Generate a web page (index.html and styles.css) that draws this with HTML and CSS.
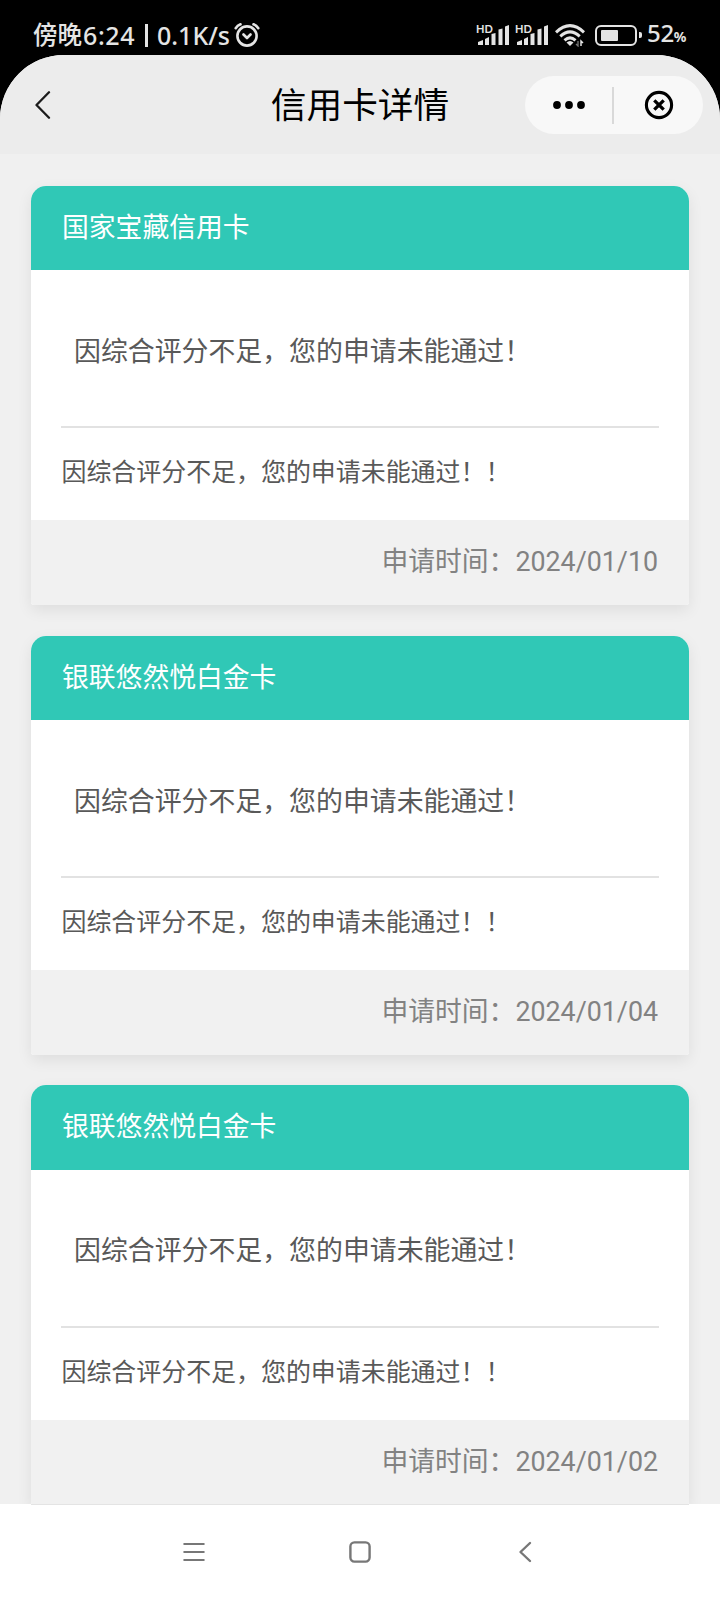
FILE: index.html
```html
<!DOCTYPE html>
<html lang="zh-CN">
  <head>
    <meta charset="utf-8">
    <meta name="viewport" content="width=device-width, initial-scale=1">
    <title>信用卡详情</title>
    <link rel="stylesheet" href="styles.css">
  </head>
  <body>
    <div class="status-bar">
      <div class="status-left">
        <span class="period">傍晚</span>
        <span class="clock">6:24</span>
        <span class="sep"></span>
        <span class="speed">0.1K/s</span>
        <svg class="alarm" width="26" height="26" viewBox="0 0 26 26" fill="none" stroke="#e4e4e4" stroke-width="2.6" stroke-linecap="round" stroke-linejoin="round">
          <circle cx="13" cy="14" r="9.6"/>
          <path d="M9.5 12.5l3.5 3.5 3.5-3.5M1.7 6.2Q3.5 3.4 6.5 2.3M24.3 6.2Q22.5 3.4 19.5 2.3"/>
        </svg>
      </div>
      <div class="status-right">
        <div class="signal">
          <span class="hd">HD</span>
          <svg width="32" height="20" viewBox="0 0 32 20" fill="#e4e4e4">
            <path d="M0 20v-3l5-2v5zM7 20v-6l4-2v8zM13.500 20V9l4-1v12zM20.500 20V4.500l4-1V20zM27 20V1.500L31 0v20z"/>
          </svg>
        </div>
        <div class="signal">
          <span class="hd">HD</span>
          <svg width="32" height="20" viewBox="0 0 32 20" fill="#e4e4e4">
            <path d="M0 20v-3l5-2v5zM7 20v-6l4-2v8zM13.500 20V9l4-1v12zM20.500 20V4.500l4-1V20zM27 20V1.500L31 0v20z"/>
          </svg>
        </div>
        <svg class="wifi" width="30" height="24" viewBox="0 0 30 24" fill="none" stroke="#e4e4e4" stroke-width="3">
          <path d="M1 9.300Q15-3.900 29 9.300M5.300 13.400Q15 4.400 24.700 13.400M9.500 17.300Q15 12.500 20.500 17.300"/>
          <path d="M11.500 19.500Q15 16.500 18.500 19.500L15 23z" fill="#e4e4e4" stroke="none"/>
          <path d="M23 18v5l-2-2" stroke="#777" stroke-width="1.300"/>
          <path d="M26 23v-5l2 2" stroke-width="1.500"/>
        </svg>
        <div class="battery"><span class="level"></span></div>
        <span class="percent">52<small>%</small></span>
      </div>
    </div>

    <div class="app">
      <header class="nav-bar">
        <svg class="back" width="16" height="28" viewBox="0 0 16 28" fill="none" stroke="#1c1c1c" stroke-width="2.300" stroke-linecap="round" stroke-linejoin="round">
          <path d="M14 1.300L1.500 14 14 26.700"/>
        </svg>
        <h1>信用卡详情</h1>
        <div class="capsule">
          <svg class="more" width="32" height="8" viewBox="0 0 32 8">
            <circle cx="4" cy="4" r="3.900"/>
            <circle cx="16" cy="4" r="3.900"/>
            <circle cx="28" cy="4" r="3.900"/>
          </svg>
          <span class="line"></span>
          <svg class="close" width="30" height="30" viewBox="0 0 30 30" fill="none" stroke="#000" stroke-width="3.100">
            <circle cx="15" cy="15" r="12.600"/>
            <path d="M10.300 10.300l9.400 9.400M19.700 10.300l-9.400 9.400" stroke-width="3.300"/>
          </svg>
        </div>
      </header>

      <main>
        <section class="card">
          <h2>国家宝藏信用卡</h2>
          <div class="card-body">
            <p class="result">因综合评分不足，您的申请未能通过！</p>
            <p class="reason">因综合评分不足，您的申请未能通过！！</p>
          </div>
          <div class="card-footer">申请时间：2024/01/10</div>
        </section>
        <section class="card">
          <h2>银联悠然悦白金卡</h2>
          <div class="card-body">
            <p class="result">因综合评分不足，您的申请未能通过！</p>
            <p class="reason">因综合评分不足，您的申请未能通过！！</p>
          </div>
          <div class="card-footer">申请时间：2024/01/04</div>
        </section>
        <section class="card">
          <h2>银联悠然悦白金卡</h2>
          <div class="card-body">
            <p class="result">因综合评分不足，您的申请未能通过！</p>
            <p class="reason">因综合评分不足，您的申请未能通过！！</p>
          </div>
          <div class="card-footer">申请时间：2024/01/02</div>
        </section>
      </main>
    </div>

    <footer class="system-nav">
      <svg width="24" height="24" viewBox="0 0 24 24" fill="none" stroke="#777" stroke-width="2.200" stroke-linecap="round">
        <path d="M2.300 4h19.400M2.300 12h19.400M2.300 20h19.400"/>
      </svg>
      <svg width="24" height="24" viewBox="0 0 24 24" fill="none" stroke="#777" stroke-width="2.400">
        <rect x="2.400" y="2.400" width="19.200" height="19.200" rx="4"/>
      </svg>
      <svg width="24" height="24" viewBox="0 0 24 24" fill="none" stroke="#777" stroke-width="2.400" stroke-linecap="round" stroke-linejoin="round">
        <path d="M16 3L6.500 12l9.500 9"/>
      </svg>
    </footer>
  </body>
</html>
```
FILE: styles.css
```css
* {
    box-sizing: border-box;
}

body {
    margin: 0;
    height: 1600px;
    display: flex;
    flex-direction: column;
    overflow: hidden;
    background: #000;
    font-family: Roboto, 'Noto Sans CJK SC', sans-serif;
}

h1, h2, p {
    margin: 0;
    font-weight: 400;
}

svg {
    display: block;
    flex: none;
}

.status-bar {
    flex: none;
    height: 55px;
    padding: 14px 33px 0 33px;
    display: flex;
    justify-content: space-between;
    color: #e4e4e4;
    font-family: 'Noto Sans', 'Noto Sans CJK SC', sans-serif;
    font-size: 25px;
    font-weight: 500;
    line-height: 42px;
}

.status-left, .status-right {
    display: flex;
    align-items: center;
    height: 42px;
    white-space: nowrap;
}

.period {
    width: 50px;
    font-size: 24.5px;
}

.clock {
    width: 62px;
    letter-spacing: 0.6px;
}

.sep {
    width: 3px;
    height: 23px;
    background: #e4e4e4;
}

.speed {
    width: 74px;
    margin-left: 9px;
}

.alarm {
    margin-left: 3px;
}

.signal {
    position: relative;
    width: 33px;
    margin-right: 6px;
    padding-left: 1px;
}

.hd {
    position: absolute;
    left: -1px;
    top: -1px;
    font-family: Lato, sans-serif;
    font-size: 11px;
    font-weight: 700;
    line-height: 10px;
}

.wifi {
    margin-right: 10px;
}

.battery {
    width: 42px;
    height: 21px;
    border: 2px solid #e4e4e4;
    border-radius: 6px;
    padding: 3px 3px 3px 4px;
    position: relative;
}

.battery:after {
    content: "";
    position: absolute;
    right: -7px;
    top: 5px;
    width: 3px;
    height: 6px;
    border-radius: 0 2px 2px 0;
    background: #e4e4e4;
}

.level {
    display: block;
    width: 17px;
    height: 11px;
    border-radius: 1px;
    background: #e4e4e4;
}

.percent {
    width: 40px;
    margin-left: 10px;
    font-size: 24px;
    letter-spacing: -0.3px;
}

.percent small {
    font-size: 14px;
    font-weight: 700;
}

.app {
    flex: none;
    height: 1449px;
    overflow: hidden;
    border-radius: 64px 64px 0 0;
    background: #f0f0f0;
}

.nav-bar {
    height: 99px;
    padding: 1px 17px 0 35px;
    display: grid;
    grid-template-columns: 160px 1fr 178px;
    align-items: center;
    background: #ececec;
}

h1 {
    padding-top: 2px;
    text-align: center;
    font-size: 35.7px;
    line-height: 50px;
    color: #000;
}

.capsule {
    height: 58px;
    display: flex;
    align-items: center;
    border-radius: 29px;
    background: #f8f8f8;
}

.more {
    margin-left: 28px;
}

.line {
    width: 2px;
    height: 37px;
    margin: 0 30px 0 27px;
    background: #d9d9d9;
}

main {
    padding: 32px 31px 0;
}

.card {
    margin-bottom: 31px;
    border-radius: 15px 15px 3px 3px;
    background: #fff;
    box-shadow: 0 5px 15px rgba(0, 0, 0, 0.08);
    overflow: hidden;
}

.card:nth-child(2) {
    margin-bottom: 30px;
}

.card h2 {
    height: 84px;
    padding-left: 31px;
    background: #30c8b6;
    color: #fff;
    font-size: 26.8px;
    line-height: 84px;
}

.card:last-child h2 {
    height: 85px;
}

.card-body {
    height: 250px;
    padding: 0 30px;
    color: #595959;
    font-weight: 300;
}

.result {
    height: 158px;
    padding-left: 13px;
    border-bottom: 2px solid #e2e2e2;
    font-size: 26.9px;
    line-height: 164px;
}

.card:last-child .result {
    line-height: 162px;
}

.reason {
    padding-left: 0.5px;
    font-size: 24.95px;
    line-height: 89px;
}

.card-footer {
    height: 85px;
    padding-right: 31px;
    background: #f1f1f1;
    color: #828282;
    font-size: 26.8px;
    line-height: 84px;
    text-align: right;
}

.system-nav {
    flex: 1;
    position: relative;
    display: flex;
    justify-content: center;
    align-items: center;
    gap: 142px;
    background: #fff;
}

.system-nav:before {
    content: "";
    position: absolute;
    left: 31px;
    right: 31px;
    top: 0;
    height: 1px;
    background: #e4e4e4;
}
```
